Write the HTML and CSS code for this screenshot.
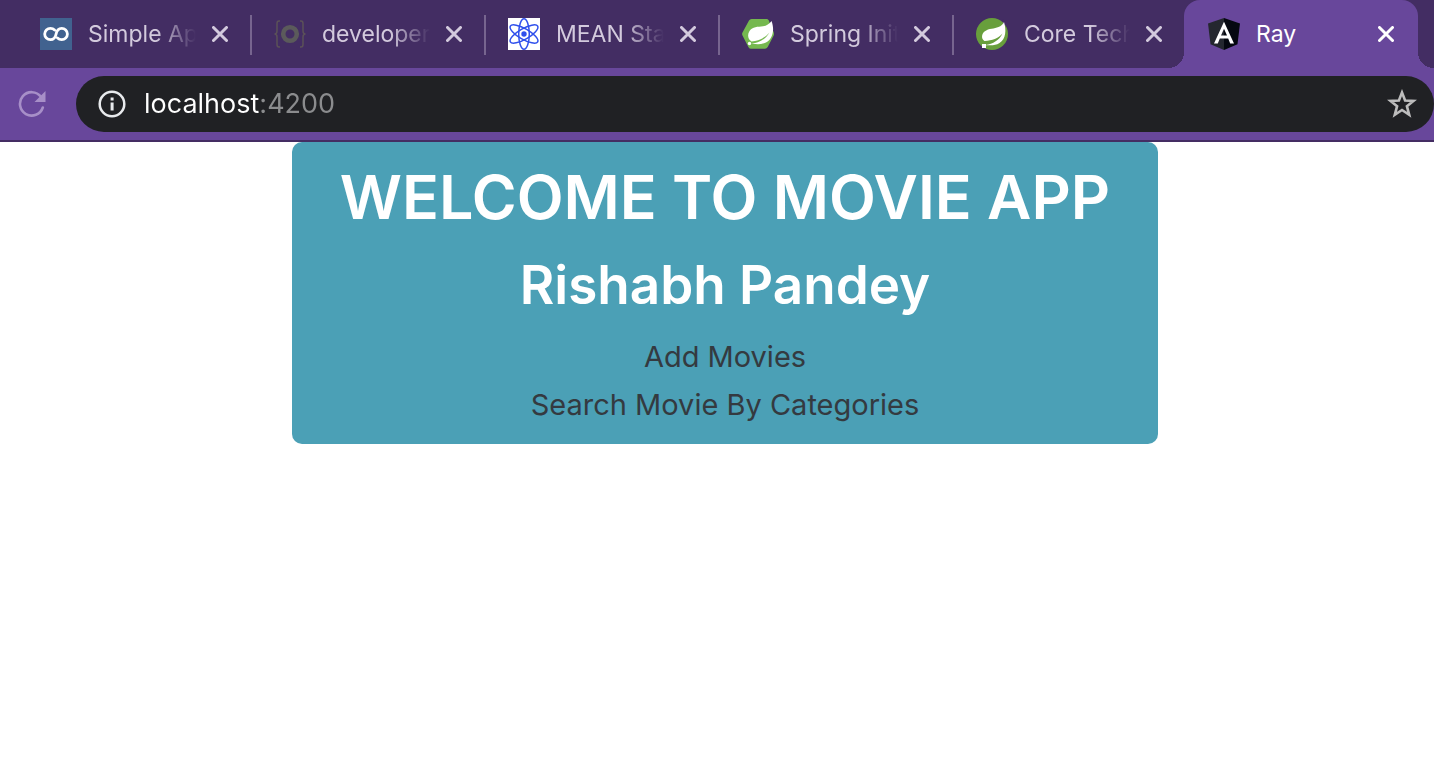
FILE: index.html
```html
<!DOCTYPE html>
<html lang="en">
<head>
<meta charset="utf-8">
<meta name="viewport" content="width=device-width, initial-scale=1">
<title>Ray</title>
<link rel="stylesheet" href="styles.css">
</head>
<body>
<header class="browser">
  <div class="tabs" role="tablist" aria-label="Open tabs">
    <div class="tab" role="tab">
      <svg class="favicon" viewBox="0 0 32 32" aria-hidden="true"><path fill="#41628f" d="M0 0h32v32H0z"/><path fill="none" stroke="#fff" stroke-width="2.8" stroke-linecap="round" d="M14.600 11.900C13.500 10.800 12 10.300 10.400 10.300a5.700 5.700 0 1 0 0 11.400c3.600 0 5.200-3 5.700-5.700.5-2.700 2.100-5.700 5.600-5.700a5.700 5.700 0 1 1 0 11.400c-1.700 0-3.100-.6-4.200-1.700"/></svg>
      <span class="title">Simple Ap</span>
      <button class="close" type="button" aria-label="Close Simple Ap"><svg viewBox="0 0 16 16"><path d="M1.500 1.500l13 13M14.500 1.500l-13 13"/></svg></button>
    </div>
    <div class="tab" role="tab">
      <svg class="favicon" viewBox="0 0 32 32" aria-hidden="true"><circle cx="16" cy="16" r="6.800" fill="none" stroke="#5b5a5b" stroke-width="4.600"/><path fill="none" stroke="#5b5158" stroke-width="1.500" d="M6 3H5Q3 3 3 5.500V13Q3 16 .5 16Q3 16 3 19V26.500Q3 29 5 29H6M26 3h1q2 0 2 2.500V13q0 3 2.500 3Q29 16 29 19v7.500q0 2.500-2 2.500h-1"/></svg>
      <span class="title">developer</span>
      <button class="close" type="button" aria-label="Close developer"><svg viewBox="0 0 16 16"><path d="M1.500 1.500l13 13M14.500 1.500l-13 13"/></svg></button>
    </div>
    <div class="tab" role="tab">
      <svg class="favicon" viewBox="0 0 32 32" aria-hidden="true"><path fill="#fff" d="M0 0h32v32H0z"/><g fill="none" stroke="#3050ec" stroke-width="1.500"><ellipse cx="16" cy="16" rx="5.300" ry="15.200"/><ellipse cx="16" cy="16" rx="5.300" ry="15.800" transform="rotate(60 16 16)"/><ellipse cx="16" cy="16" rx="5.300" ry="15.800" transform="rotate(-60 16 16)"/></g><circle cx="16" cy="16" r="2.700" fill="#3050ec"/></svg>
      <span class="title">MEAN Sta</span>
      <button class="close" type="button" aria-label="Close MEAN Sta"><svg viewBox="0 0 16 16"><path d="M1.500 1.500l13 13M14.500 1.500l-13 13"/></svg></button>
    </div>
    <div class="tab" role="tab">
      <svg class="favicon" viewBox="0 0 32 32" aria-hidden="true"><path fill="#75b84f" d="M9.500 1h15q1.400 0 2.200 1.300l5 11.900q.6 1.700 0 3.300l-6 11.500q-1 1.800-2.700 1.800H9q-1.600 0-2.500-1.600L.5 17.500q-.8-1.500 0-3L7 2.500Q7.900 1 9.500 1z"/><path fill="#fff" d="M29.500 3c3.300 8.500 1.500 17.800-5.500 21.500-5.500 2.900-11.500 1-15.500 1.700 8-1.100 15-4.700 19-11.700-4.500 5.500-10.500 8-18 9-3.500-2-4.500-6.500-2-10.500 3-4.600 8.300-4 13.500-4.700 3.600-.5 6.500-2.300 8.500-5.300z"/><circle cx="7.500" cy="25.500" r="1.700" fill="#fff"/></svg>
      <span class="title">Spring Init</span>
      <button class="close" type="button" aria-label="Close Spring Init"><svg viewBox="0 0 16 16"><path d="M1.500 1.500l13 13M14.500 1.500l-13 13"/></svg></button>
    </div>
    <div class="tab tab-last" role="tab">
      <svg class="favicon" viewBox="0 0 32 32" aria-hidden="true"><circle cx="16" cy="16" r="16" fill="#689f3c"/><path fill="#432d63" d="M26.500 1l3.500 5-2 2z"/><path fill="#fff" d="M28 4c2.500 8 2 17-4.500 21-4.500 2.800-9 2.500-14 2 7.500-1 14-5 17-11.500-4.500 5-10 7-18 7.500-3.500-2-3-7 0-9.500 4.500-3.500 10-2.500 14-4.500 2.500-1 4.500-2.500 5.500-5zM6 26h4v4H6z"/></svg>
      <span class="title">Core Tech</span>
      <button class="close" type="button" aria-label="Close Core Tech"><svg viewBox="0 0 16 16"><path d="M1.500 1.500l13 13M14.500 1.500l-13 13"/></svg></button>
    </div>
    <div class="tab tab-active" role="tab" aria-selected="true">
      <svg class="favicon" viewBox="0 0 32 32" aria-hidden="true"><path fill="#24272f" d="M16 0L0 5.500l2.500 20.700L16 32z"/><path fill="#050810" d="M16 0l16 5.500-2.500 20.700L16 32z"/><path fill="#fff" fill-rule="evenodd" d="M16 3.800L6 25.500h3.800l2-5h8.400l2 5H26zm0 7l3 6.700h-6z"/></svg>
      <span class="title">Ray</span>
      <button class="close" type="button" aria-label="Close Ray"><svg viewBox="0 0 16 16"><path d="M1.500 1.500l13 13M14.500 1.500l-13 13"/></svg></button>
    </div>
  </div>
  <div class="toolbar">
    <button class="tool reload" type="button" aria-label="Reload"><svg viewBox="0 0 28 28"><path fill="none" stroke="currentColor" stroke-width="2.600" stroke-linecap="round" d="M24.800 17.500A11.700 11.700 0 1 1 23 6.800"/><path fill="currentColor" d="M27.500 1v11h-11z"/></svg></button>
    <div class="omnibox">
      <button class="tool" type="button" aria-label="Site information"><svg viewBox="0 0 28 28"><circle cx="14" cy="14" r="12.300" fill="none" stroke="#e8eaed" stroke-width="2.500"/><path fill="#e8eaed" d="M12.600 7.500h3v3h-3zM12.600 12.500h3v8h-3z"/></svg></button>
      <input class="address" type="text" value="localhost:4200" aria-label="Address" spellcheck="false">
      <button class="tool star" type="button" aria-label="Bookmark this page"><svg viewBox="0 0 30 30"><path fill="none" stroke="currentColor" stroke-width="2.600" d="M15 3.500l3.100 8 8.400.4-6.600 5.300 2.300 8.600L15 21l-7.200 4.800 2.300-8.600-6.600-5.300 8.400-.4z"/></svg></button>
    </div>
  </div>
</header>
<main class="page">
  <section class="banner">
    <h1 class="heading">WELCOME TO MOVIE APP</h1>
    <h2 class="author">Rishabh Pandey</h2>
    <nav class="links">
      <a class="link" href="#add">Add Movies</a>
      <a class="link" href="#search">Search Movie By Categories</a>
    </nav>
  </section>
</main>
</body>
</html>
```

FILE: styles.css
```css
* {
  box-sizing: border-box;
}

body {
  margin: 0;
  background: #fff;
  font-family: Inter, "Liberation Sans", sans-serif;
  overflow-x: hidden;
}

button {
  padding: 0;
  border: 0;
  background: none;
  color: inherit;
}

svg {
  display: block;
}

.browser {
  background: #68479b;
  border-bottom: 2px solid #442d63;
}

.tabs {
  display: flex;
  height: 68px;
  padding: 0 16px;
  background: #432d63;
  color: #d3cadd;
}

.tab {
  position: relative;
  display: flex;
  flex: 1 1 234px;
  align-items: center;
  min-width: 0;
  padding: 0 22px 0 24px;
}

.tab-last {
  flex-basis: 232px;
}

.tab:not(.tab-last, .tab-active)::after {
  content: "";
  position: absolute;
  right: -2px;
  top: 15px;
  width: 2px;
  height: 40px;
  background: #77658f;
}

.tab-active {
  padding-right: 24px;
  background: #68479b;
  border-radius: 16px 16px 0 0;
  color: #fff;
}

.tab-active::before,
.tab-active::after {
  content: "";
  position: absolute;
  bottom: 0;
  width: 16px;
  height: 16px;
}

.tab-active::before {
  right: 100%;
  background: radial-gradient(circle at 0 0, transparent 16px, #68479b 16px);
}

.tab-active::after {
  left: 100%;
  background: radial-gradient(circle at 100% 0, transparent 16px, #68479b 16px);
}

.favicon {
  flex: none;
  width: 32px;
  height: 32px;
  margin-right: 16px;
}

.title {
  flex: 1;
  min-width: 0;
  white-space: nowrap;
  font-size: 23px;
  line-height: 32px;
  mask-image: linear-gradient(to left, transparent, #000 40px);
}

.tab-active .title {
  mask-image: none;
}

.close {
  flex: none;
  margin-left: 16px;
}

.close svg {
  width: 16px;
  height: 16px;
  fill: none;
  stroke: currentColor;
  stroke-width: 3px;
  stroke-linecap: round;
}

.toolbar {
  display: flex;
  align-items: center;
  gap: 30px;
  padding: 8px 0 8px 18px;
}

.tool {
  flex: none;
}

.tool svg {
  width: 28px;
  height: 28px;
}

.reload {
  color: #a78fc8;
}

.omnibox {
  display: flex;
  flex: 1;
  align-items: center;
  gap: 18px;
  height: 56px;
  padding: 0 17px 0 22px;
  border-radius: 28px;
  background: #202124;
}

.address {
  flex: 1;
  min-width: 0;
  padding: 0;
  border: 0;
  outline: 0;
  font: 27px/36px Inter, "Liberation Sans", sans-serif;
  color: transparent;
  caret-color: #fff;
  background: linear-gradient(to right, #fff 115px, #8b8c8e 115px);
  background-clip: text;
}

.star {
  color: #bdbdbd;
}

.star svg {
  width: 30px;
  height: 30px;
}

.page {
  display: flex;
  justify-content: center;
  padding-left: 16px;
}

.banner {
  width: 100%;
  max-width: 866px;
  padding: 17px 16px 15px;
  border-radius: 10px;
  background: #4ba0b6;
  text-align: center;
}

.heading,
.author {
  color: #fff;
  font-weight: 600;
}

.heading {
  margin: 0 0 16px;
  font-size: 61px;
  line-height: 76px;
}

.author {
  margin: 0 0 14px;
  font-size: 53px;
  line-height: 68px;
}

.links {
  display: flex;
  flex-direction: column;
  align-items: center;
}

.link {
  color: #343a40;
  font-size: 29px;
  line-height: 48px;
  text-decoration: none;
}
```
